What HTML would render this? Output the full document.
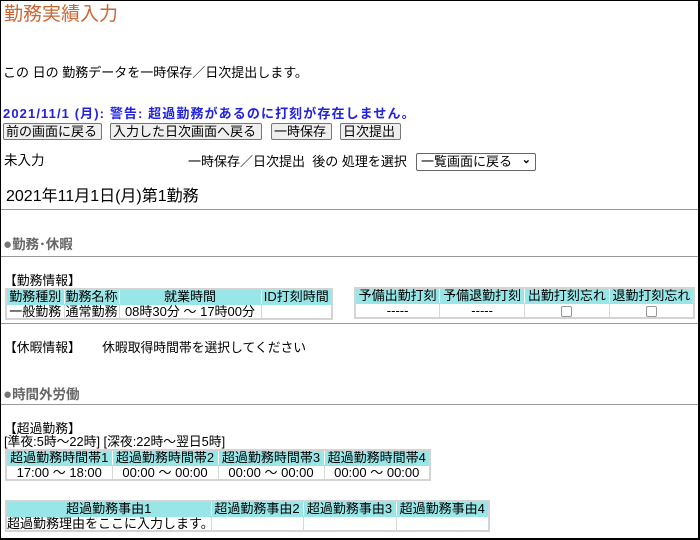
<!DOCTYPE html>
<html><head><meta charset="utf-8"><style>
*{margin:0;padding:0;box-sizing:border-box}
body{width:700px;height:540px;background:#fff;font-family:"Liberation Sans","Noto Sans CJK JP",sans-serif;font-size:12.8px;color:#000;position:relative;overflow:hidden}
.frame{position:absolute;left:0;top:0;width:700px;height:540px;border:1px solid #000;border-right-width:2px;border-bottom-width:2px}
.a{position:absolute;white-space:nowrap;line-height:14px}
.hr{position:absolute;left:1px;width:697px;height:1px;background:#999}
.btn{position:absolute;top:123px;height:17px;border:1px solid #777;border-radius:2px;background:#efefef;font-size:13px;line-height:15px;padding:0 2px;white-space:nowrap;overflow:hidden}
table{position:absolute;border-collapse:collapse;table-layout:fixed;border:2px solid #d4d4d4;font-size:13px}
td{border:1px solid #d8d8d8;height:15px;line-height:13px;padding:0;white-space:nowrap;overflow:hidden;text-align:center}
tr.h td{background:#99e6e8;border-color:#99e6e8 #fff}
.sec{color:#666;font-weight:bold;font-size:13.5px}
.sec b{font-size:15px;color:#777}
.cb{display:inline-block;width:11px;height:11px;border:1px solid #999;border-radius:2px;vertical-align:middle}
</style></head><body>
<div class="frame"></div>
<div class="a" style="left:4px;top:4px;font-size:19px;line-height:22px;color:#cc6633">勤務実績入力</div>
<div class="a" style="left:3px;top:66px;font-size:13px">この 日の 勤務データを一時保存／日次提出します。</div>
<div class="a" style="left:3px;top:107px;color:#2222dd;font-weight:bold;font-size:13px;letter-spacing:1.1px">2021/11/1 (月): 警告: 超過勤務があるのに打刻が存在しません。</div>
<div class="btn" style="left:3px;width:99px">前の画面に戻る</div>
<div class="btn" style="left:110px;width:152px">入力した日次画面へ戻る</div>
<div class="btn" style="left:271px;width:61px">一時保存</div>
<div class="btn" style="left:340px;width:61px">日次提出</div>
<div class="a" style="left:4px;top:154px;font-size:13.5px">未入力</div>
<div class="a" style="left:188px;top:155px;font-size:13px">一時保存／日次提出&nbsp; 後の 処理を選択</div>
<div class="a" style="left:416px;top:153px;width:120px;height:18px;border:1px solid #666;border-radius:2px;padding-left:4px;line-height:16px;font-size:13px">一覧画面に戻る <span style="position:absolute;right:4px;top:-2px;font-size:11px;font-weight:bold">&#x2304;</span></div>
<div class="a" style="left:6px;top:187px;font-size:16px;line-height:20px">2021年11月1日(月)第1勤務</div>
<div class="hr" style="top:209px"></div>
<div class="a sec" style="left:3px;top:238px"><b>●</b>勤務･休暇</div>
<div class="hr" style="top:256px"></div>
<div class="a" style="left:4px;top:274px">【勤務情報】</div>
<table style="left:5px;top:288px;width:326px">
<colgroup><col style="width:58px"><col style="width:55px"><col style="width:142px"><col style="width:71px"></colgroup>
<tr class="h"><td>勤務種別</td><td>勤務名称</td><td>就業時間</td><td>ID打刻時間</td></tr>
<tr><td>一般勤務</td><td>通常勤務</td><td>08時30分 ～ 17時00分</td><td></td></tr>
</table>
<table style="left:354px;top:287px;width:341px">
<tr class="h"><td>予備出勤打刻</td><td>予備退勤打刻</td><td>出勤打刻忘れ</td><td>退勤打刻忘れ</td></tr>
<tr><td>-----</td><td>-----</td><td><span class="cb"></span></td><td><span class="cb"></span></td></tr>
</table>
<div class="hr" style="top:323px"></div>
<div class="a" style="left:4px;top:341px">【休暇情報】&nbsp;&nbsp;&nbsp;&nbsp;&nbsp; 休暇取得時間帯を選択してください</div>
<div class="a sec" style="left:3px;top:388px"><b>●</b>時間外労働</div>
<div class="hr" style="top:404px"></div>
<div class="a" style="left:4px;top:422px">【超過勤務】</div>
<div class="a" style="left:4px;top:435px">[準夜:5時～22時] [深夜:22時～翌日5時]</div>
<table style="left:5px;top:449px;width:426px">
<tr class="h"><td>超過勤務時間帯1</td><td>超過勤務時間帯2</td><td>超過勤務時間帯3</td><td>超過勤務時間帯4</td></tr>
<tr><td>17:00 ～ 18:00</td><td>00:00 ～ 00:00</td><td>00:00 ～ 00:00</td><td>00:00 ～ 00:00</td></tr>
</table>
<table style="left:5px;top:500px;width:483px">
<colgroup><col style="width:205px"><col style="width:92px"><col style="width:93px"><col style="width:93px"></colgroup>
<tr class="h"><td>超過勤務事由1</td><td>超過勤務事由2</td><td>超過勤務事由3</td><td>超過勤務事由4</td></tr>
<tr><td style="text-align:left">超過勤務理由をここに入力します。</td><td></td><td></td><td></td></tr>
</table>
</body></html>
